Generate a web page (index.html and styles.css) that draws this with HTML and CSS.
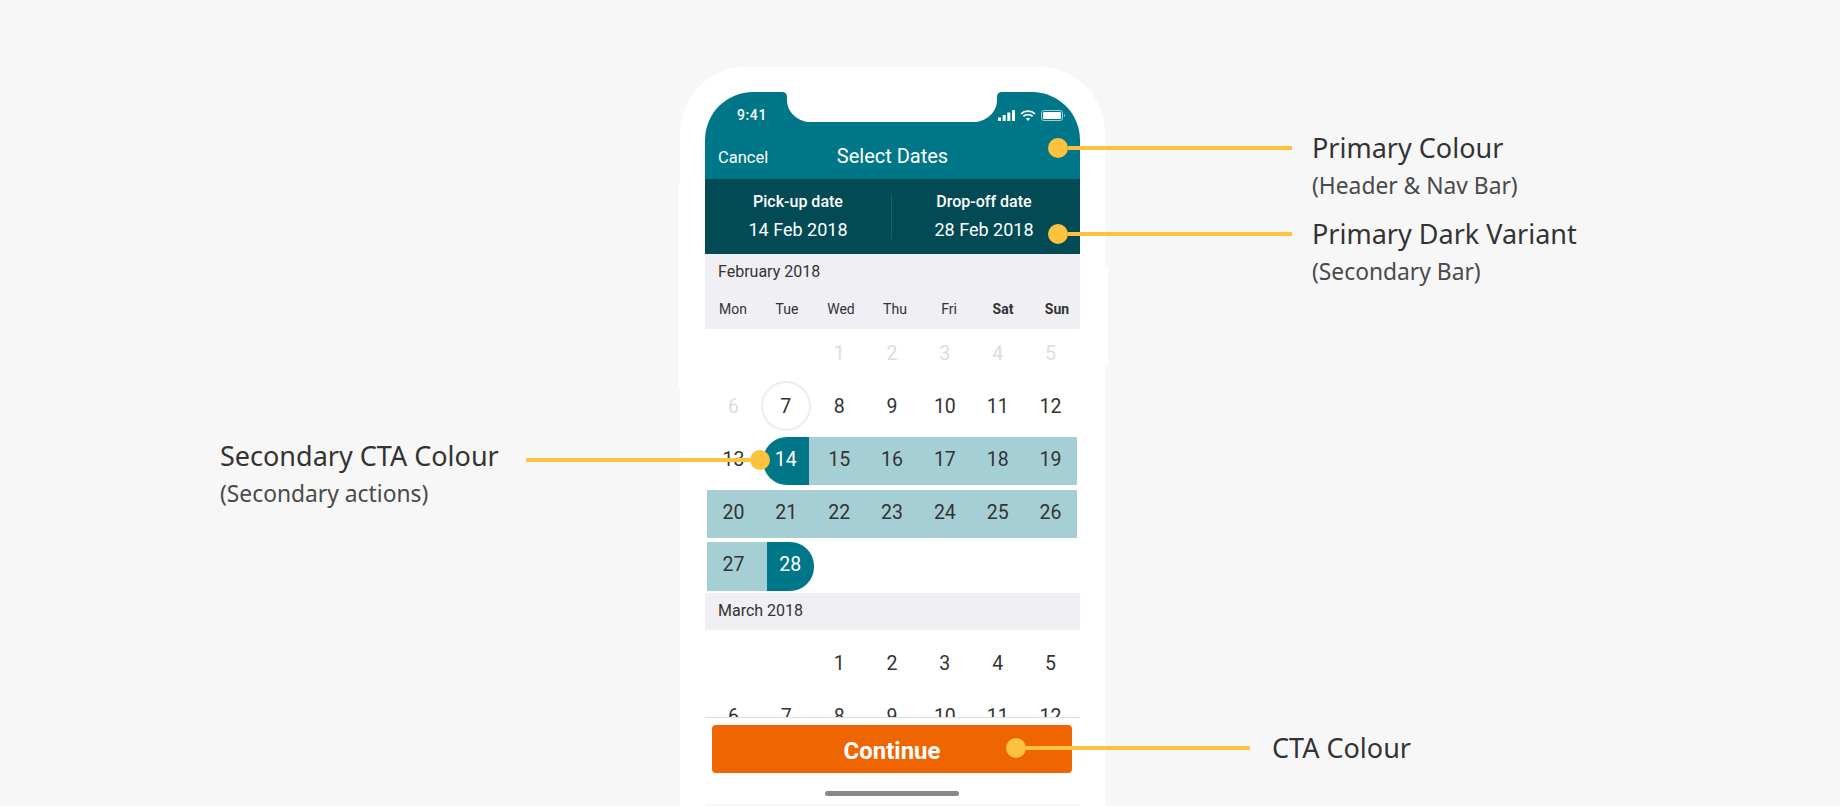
FILE: index.html
```html
<!DOCTYPE html>
<html>
<head>
    <meta charset="utf-8" />
    <title>Select Dates - colour guide</title>
    <link rel="stylesheet" href="styles.css">
</head>
<body>
<div class="page">
    <div class="phone">
        <div class="screen">
            <svg class="notch" width="220" height="30" viewBox="0 0 220 30"><path fill="#fff" d="M0 0Q5 0 5 5V8C5 22 18 30 28 30H192C202 30 215 22 215 8V5Q215 0 220 0Z"/></svg>
            <!--header-->
            <div class="header">
                <div class="status">
                    <span class="time">9:41</span>
                    <div class="status-icons">
                        <svg width="17" height="11" viewBox="0 0 17 11"><path fill="#fff" d="M0 7.500h3V11H0zM4.700 5h3v6h-3zM9.300 2.500h3V11h-3zM14 0h3v11h-3z"/></svg>
                        <svg width="16" height="11" viewBox="0 0 16 11"><path fill="none" stroke="#fff" stroke-width="1.800" d="M1 3.800C4.700.3 11.300.3 15 3.800M3.400 6.200C5.900 4 10.100 4 12.600 6.200"/><path fill="#fff" d="M8 11 5.800 8.500C7 7.500 9 7.500 10.200 8.500Z"/></svg>
                        <svg width="24" height="11" viewBox="0 0 24 11"><rect x=".5" y=".5" width="21" height="10" rx="2.500" fill="none" stroke="#9fd0d6"/><rect x="2" y="2" width="18" height="7" rx="1.200" fill="#fff"/><path fill="#9fd0d6" d="M23 4v3c.6-.2 1-.8 1-1.500S23.600 4.200 23 4z"/></svg>
                    </div>
                </div>
                <div class="nav">
                    <span class="cancel">Cancel</span>
                    <span class="title">Select Dates</span>
                </div>
            </div>
            <div class="range">
                <div class="range-col">
                    <b>Pick-up date</b>
                    <span>14 Feb 2018</span>
                </div>
                <div class="range-col">
                    <b>Drop-off date</b>
                    <span>28 Feb 2018</span>
                </div>
            </div>
            <!--calendar-->
            <div class="calendar">
                <div class="month">
                    <p>February 2018</p>
                    <ul class="weekdays">
                        <li>Mon</li><li>Tue</li><li>Wed</li><li>Thu</li><li>Fri</li><li class="bold">Sat</li><li class="bold">Sun</li>
                    </ul>
                </div>
                <ul class="week">
                    <li></li><li></li><li class="off">1</li><li class="off">2</li><li class="off">3</li><li class="off">4</li><li class="off">5</li>
                </ul>
                <ul class="week">
                    <li class="off">6</li><li class="today">7</li><li>8</li><li>9</li><li>10</li><li>11</li><li>12</li>
                </ul>
                <ul class="week first-range">
                    <li>13</li><li class="start">14</li><li class="in">15</li><li class="in">16</li><li class="in">17</li><li class="in">18</li><li class="in">19</li>
                </ul>
                <ul class="week range-row">
                    <li class="in">20</li><li class="in">21</li><li class="in">22</li><li class="in">23</li><li class="in">24</li><li class="in">25</li><li class="in">26</li>
                </ul>
                <ul class="week range-row last-range">
                    <li class="in">27</li><li class="end">28</li><li></li><li></li><li></li><li></li><li></li>
                </ul>
                <div class="month short">
                    <p>March 2018</p>
                </div>
                <ul class="week">
                    <li></li><li></li><li>1</li><li>2</li><li>3</li><li>4</li><li>5</li>
                </ul>
                <ul class="week">
                    <li>6</li><li>7</li><li>8</li><li>9</li><li>10</li><li>11</li><li>12</li>
                </ul>
            </div>
            <div class="footer">
                <div class="btn">Continue</div>
                <div class="home"></div>
            </div>
        </div>
    </div>

    <!--callouts-->
    <div class="pin pin-primary"><i></i><em></em></div>
    <div class="pin pin-dark"><i></i><em></em></div>
    <div class="pin pin-secondary"><em></em><i></i></div>
    <div class="pin pin-cta"><i></i><em></em></div>

    <div class="note note-primary"><h3>Primary Colour</h3><p>(Header &amp; Nav Bar)</p></div>
    <div class="note note-dark"><h3>Primary Dark Variant</h3><p>(Secondary Bar)</p></div>
    <div class="note note-secondary"><h3>Secondary CTA Colour</h3><p>(Secondary actions)</p></div>
    <div class="note note-cta"><h3>CTA Colour</h3></div>
</div>
</body>
</html>
```

FILE: styles.css
```css
/*reset*/
body,div,ul,p,li,h3{padding:0; margin:0;}
li{list-style:none;}
i,em{display:block; font-style:normal;}

body{background:#f7f7f7; font-family:"Roboto","Liberation Sans",sans-serif; color:#333;}

.page{position:relative; width:1840px; height:806px; overflow:hidden;}

/*phone*/
.phone{width:375px; height:714px; margin-left:680px; padding:25px 25px 0; background:#fff; border-radius:66px 66px 0 0; position:relative; top:67px;}
.phone:before{content:""; position:absolute; left:-2px; top:116px; width:10px; height:204px; background:#fff;}
.phone:after{content:""; position:absolute; right:-3px; top:200px; width:10px; height:98px; background:#fff;}

.screen{position:relative; z-index:1; width:375px; height:714px; background:#fff; border-radius:48px 48px 0 0; overflow:hidden; display:flex; flex-direction:column;}
.notch{position:absolute; top:0; left:77px;}

.header{height:87px; background:#007788; color:#fff; flex:none;}
.status{display:flex; justify-content:space-between; align-items:center; height:46px; padding:0 15px 0 32px;}
.time{font-size:14px; font-weight:500; letter-spacing:.6px;}
.status-icons{display:flex; gap:5px;}
.nav{display:grid; grid-template-columns:1fr auto 1fr; align-items:center; padding:0 13px; height:38px;}
.cancel{font-size:16.500px;}
.title{font-size:20px; position:relative; top:-1px;}

.range{height:75px; background:#024b55; color:#fff; display:flex; padding:15px 0; flex:none; box-sizing:border-box;}
.range-col{flex:1; display:flex; flex-direction:column; align-items:center; gap:11px;}
.range-col:first-child{flex:0 0 186px; border-right:1px solid #1c5f69;}
.range-col:last-child{padding-right:4px;}
.range-col b{font-size:16px; font-weight:500; line-height:15px;}
.range-col span{font-size:18px; line-height:20px;}

/*calendar*/
.calendar{height:463px; overflow:hidden; flex:none;}
.month{background:#efeff4; height:75px; padding:0 13px; box-sizing:border-box;}
.month p{font-size:16px; line-height:36px;}
.month.short{height:37px; margin-top:2px;}
.weekdays{display:grid; grid-template-columns:repeat(7,54px); margin:3px 0 0 -12px; font-size:14px; text-align:center; line-height:32px;}
.weekdays .bold{font-weight:700;}

.week{display:grid; grid-template-columns:repeat(7,1fr); height:48px; padding:0 3px 0 2px; margin-top:5px; font-size:19.500px; text-align:center;}
.month + .week{margin-top:0;}
.month.short + .week{margin-top:9px;}
.week li{line-height:50px;}
.week.first-range{margin-top:7px;}
.first-range li{line-height:45px;}
.range-row li{line-height:46px;}
.week.last-range{height:49px; margin-top:4px;}
.off{color:#ddd;}
.week .today{border:2px solid #ecedf2; border-radius:50%; box-sizing:border-box; width:50px; height:50px; margin:-1px 0 0 1px; line-height:47px;}
.in{background:#a6cfd5;}
.start{background:#007788; color:#fff; border-radius:24px 0 0 24px; margin:0 4px 0 3px; box-shadow:4px 0 0 #a6cfd5;}
.end{background:#007788; color:#fff; border-radius:0 24px 24px 0; margin:0 -1px 0 7px; box-shadow:-7px 0 0 #a6cfd5;}

/*footer*/
.footer{flex:1; border-top:1px solid #ddd; position:relative; padding:7px 8px 0 7px;}
.btn{height:48px; line-height:53px; background:#ee6502; color:#fff; border-radius:4px; text-align:center; font-size:24px; font-weight:700;}
.home{width:134px; height:5px; border-radius:3px; background:#888; margin:18px auto 0;}
.footer:after{content:""; position:absolute; left:0; right:0; bottom:0; height:2px; background:#f7f7f7;}

/*callouts*/
.pin{position:absolute; display:flex; align-items:center; z-index:2;}
.pin i{width:20px; height:20px; border-radius:50%; background:#fdc23e; flex:none;}
.pin em{height:4px; background:#fdc23e;}
.pin-primary{left:1048px; top:138px;}
.pin-primary em{width:224px;}
.pin-dark{left:1048px; top:224px;}
.pin-dark em{width:224px;}
.pin-secondary{left:526px; top:450px;}
.pin-secondary em{width:224px;}
.pin-cta{left:1006px; top:738px;}
.pin-cta em{width:224px;}

.note{position:absolute; font-family:"Noto Sans","Open Sans",sans-serif; z-index:2;}
.note h3{font-size:27px; font-weight:400; line-height:38px; color:#333;}
.note p{font-size:22.800px; line-height:38px; color:#4a4a4a;}
.note-primary{left:1312px; top:129px;}
.note-dark{left:1312px; top:215px;}
.note-secondary{left:220px; top:437px;}
.note-cta{left:1272px; top:729px;}
```
